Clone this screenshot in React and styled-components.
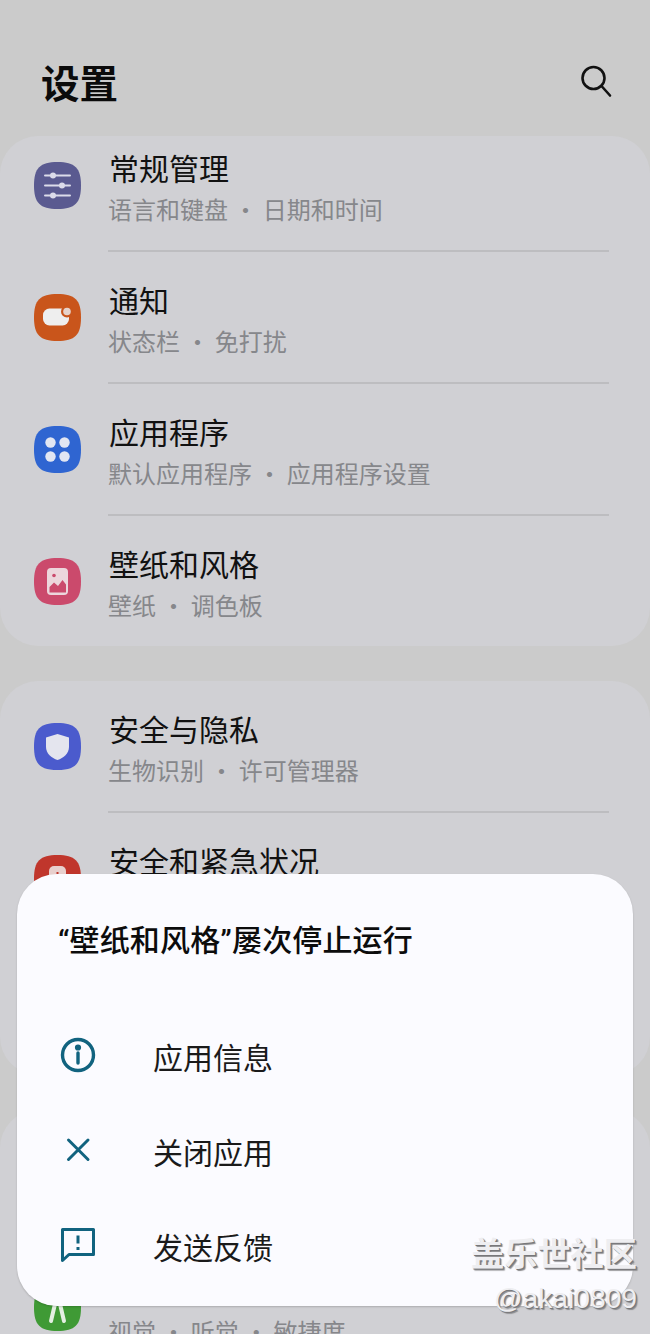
import React from "react";
import styled, { createGlobalStyle } from "styled-components";

const Global = createGlobalStyle`
  html, body { margin: 0; padding: 0; background: #cbcbcb; }
  body { font-family: "Noto Sans CJK SC", "Noto Sans", sans-serif; }
`;
const Screen = styled.div`
  position: relative; width: 650px; height: 1334px; overflow: hidden;
  background: #cbcbcb; padding-top: 56px; box-sizing: border-box;
`;
const Header = styled.header`
  display: flex; justify-content: space-between; align-items: center;
  height: 50px; padding: 0 37px 0 41px; margin-bottom: 30px;
`;
const PageTitle = styled.h1`
  margin: 0; font-size: 38.5px; line-height: 50px; font-weight: 700; color: #0b0b0b;
`;
const Card = styled.section`
  background: #d0d0d4; border-radius: 38px; margin-bottom: 35px;
  padding: ${p => p.$top}px 0 0;
  height: ${p => p.$height}px; box-sizing: border-box;
`;
const Row = styled.div`
  display: flex; align-items: flex-start; height: 132px; box-sizing: border-box;
`;
const IconSlot = styled.div`
  width: 108px; flex: none; padding: 15.5px 0 0 34px; box-sizing: border-box;
  svg { display: block; }
`;
const Body = styled.div`
  flex: 1; margin-right: 41px; height: 106px; box-sizing: border-box;
  border-bottom: ${p => (p.$last ? "none" : "2px solid #bdbdc0")};
`;
const Title = styled.div`
  font-size: 30px; line-height: 40px; color: #111; height: 40px; padding: 1px 0 0 1px;
`;
const Sub = styled.div`
  font-size: 24px; line-height: 34px; color: #86878b; margin-top: 5px; white-space: nowrap;
`;
const Sheet = styled.div`
  position: absolute; left: 17px; top: 874px; width: 616px; height: 432px;
  background: #fbfbff; border-radius: 40px; box-shadow: 0 1px 2px rgba(0,0,0,.18);
  padding: 47px 0 0 41px; box-sizing: border-box;
`;
const SheetTitle = styled.div`
  font-family: "Roboto", "Noto Sans CJK SC", sans-serif;
  font-size: 30px; line-height: 40px; font-weight: 500; letter-spacing: .15px; color: #0c0c0c; margin-bottom: 47px; white-space: nowrap;
`;
const Action = styled.div`
  display: flex; align-items: center; height: 95px;
  font-size: 30px; color: #1a1a1a;
`;
const ActionIcon = styled.div`
  width: 95px; flex: none; padding-left: 2px; margin-bottom: 1px; box-sizing: border-box;
  svg { display: block; }
`;
const Watermark = styled.div`
  position: absolute; right: 13px; top: 1232px; text-align: right; color: #eeeef1;
  text-shadow: 1px 1px 0 #77777a, 2px 2px 1px #8a8a8c;
  pointer-events: none;
`;
const MarkBrand = styled.div`
  font-size: 33.2px; line-height: 40px; font-weight: 700;
`;
const MarkUser = styled.div`
  font-family: "Liberation Sans", sans-serif; font-size: 28.2px; line-height: 30px; margin-top: 11px;
`;

const SQUIRCLE = "M23.5 0C41 0 47 6 47 23.5S41 47 23.5 47 0 41 0 23.5 6 0 23.5 0Z";
const Squircle = ({ color, children }) => (
  <svg width="47" height="47" viewBox="0 0 47 47">
    <path d={SQUIRCLE} fill={color} />
    {children}
  </svg>
);
const L = "#dcdcea";
const GeneralIcon = () => (
  <Squircle color="#5a5a90">
    <g stroke={L} strokeWidth="2" strokeLinecap="round">
      <path d="M11 13.5h25M11 23.5h25M11 33.5h25" />
    </g>
    <circle cx="19" cy="13.500" r="3" fill={L} />
    <circle cx="28" cy="23.500" r="3" fill={L} />
    <circle cx="19" cy="33.500" r="3" fill={L} />
  </Squircle>
);
const NotifyIcon = () => (
  <Squircle color="#c9551b">
    <rect x="9" y="14.500" width="26" height="17" rx="6.500" fill="#eeeeee" />
    <circle cx="33" cy="17.500" r="6" fill="#c9551b" />
    <circle cx="33" cy="17.500" r="3.800" fill="#e6d2ca" />
  </Squircle>
);
const AppsIcon = () => (
  <Squircle color="#2f65d1">
    <circle cx="16.500" cy="16.500" r="5.200" fill="#e2e6f2" />
    <circle cx="30.500" cy="16.500" r="5.200" fill="#e2e6f2" />
    <circle cx="16.500" cy="30.500" r="5.200" fill="#e2e6f2" />
    <circle cx="30.500" cy="30.500" r="5.200" fill="#e2e6f2" />
  </Squircle>
);
const WallpaperIcon = () => (
  <Squircle color="#cb4a6c">
    <rect x="13" y="10" width="21" height="27" rx="4" fill="#ecd6dc" />
    <circle cx="20" cy="17.500" r="1.800" fill="#cb4a6c" />
    <path d="M15.500 34.500v-5.500l4.500-4.500 4 3.500 4.500-6 3.500 4.500v8Z" fill="#cb4a6c" />
  </Squircle>
);
const ShieldIcon = () => (
  <Squircle color="#4b5bcd">
    <path d="M23.500 11 35 14.500V24C35 30.500 29.500 35 23.500 37 17.500 35 12 30.500 12 24V14.500Z" fill="#e4e5ee" />
  </Squircle>
);
const SafetyIcon = () => (
  <Squircle color="#c0362c">
    <rect x="15" y="11" width="17" height="25" rx="5" fill="#e8d0ce" />
    <rect x="22.500" y="17" width="2" height="6" fill="#c0362c" />
  </Squircle>
);
const AccessIcon = () => (
  <Squircle color="#3f9a35">
    <circle cx="23.500" cy="12" r="4" fill="#e4efe2" />
    <path d="M14 19h19M21 20l-4 17M26 20l4 17" stroke="#e4efe2" strokeWidth="4" strokeLinecap="round" fill="none" />
  </Squircle>
);

const Item = ({ icon, title, sub, last }) => (
  <Row>
    <IconSlot>{icon}</IconSlot>
    <Body $last={last}>
      <Title>{title}</Title>
      <Sub>{sub}</Sub>
    </Body>
  </Row>
);

const teal = "#11637f";
const Dot = () => "\u00a0•\u00a0";

export default function App() {
  return (
    <>
      <Global />
      <Screen>
        <Header>
          <PageTitle>设置</PageTitle>
          <svg width="34" height="34" viewBox="0 0 34 34" fill="none" stroke="#111" strokeWidth="2.600" strokeLinecap="round">
            <circle cx="14.500" cy="14" r="11" />
            <path d="M22.500 22 31 31.500" />
          </svg>
        </Header>
        <Card $top={10} $height={510}>
          <Item icon={<GeneralIcon />} title="常规管理" sub={<>语言和键盘<Dot />日期和时间</>} />
          <Item icon={<NotifyIcon />} title="通知" sub={<>状态栏<Dot />免打扰</>} />
          <Item icon={<AppsIcon />} title="应用程序" sub={<>默认应用程序<Dot />应用程序设置</>} />
          <Item last icon={<WallpaperIcon />} title="壁纸和风格" sub={<>壁纸<Dot />调色板</>} />
        </Card>
        <Card $top={26} $height={394}>
          <Item icon={<ShieldIcon />} title="安全与隐私" sub={<>生物识别<Dot />许可管理器</>} />
          <Item last icon={<SafetyIcon />} title="安全和紧急状况" sub="" />
        </Card>
        <Card $top={158} $height={300}>
          <Item last icon={<AccessIcon />} title="辅助功能" sub={<>视觉<Dot />听觉<Dot />敏捷度</>} />
        </Card>
        <Sheet>
          <SheetTitle>“壁纸和风格”屡次停止运行</SheetTitle>
          <Action>
            <ActionIcon>
              <svg width="36" height="36" viewBox="0 0 36 36" fill="none" stroke={teal} strokeWidth="3.400">
                <circle cx="18" cy="18" r="15.500" />
                <path d="M18 16v10" strokeLinecap="round" />
                <circle cx="18" cy="10.500" r="1.400" fill={teal} />
              </svg>
            </ActionIcon>
            应用信息
          </Action>
          <Action>
            <ActionIcon>
              <svg width="36" height="36" viewBox="0 0 36 36" fill="none" stroke={teal} strokeWidth="3" strokeLinecap="round">
                <path d="M8.500 8 28 27.500M28 8 8.500 27.500" />
              </svg>
            </ActionIcon>
            关闭应用
          </Action>
          <Action>
            <ActionIcon>
              <svg width="36" height="36" viewBox="0 0 36 36" fill="none" stroke={teal} strokeWidth="3" strokeLinejoin="round">
                <path d="M2.500 2.500h31v25H9l-6.500 6Z" />
                <path d="M18 8.500v8M18 20v3" />
              </svg>
            </ActionIcon>
            发送反馈
          </Action>
        </Sheet>
        <Watermark>
          <MarkBrand>盖乐世社区</MarkBrand>
          <MarkUser>@akai0809</MarkUser>
        </Watermark>
      </Screen>
    </>
  );
}
